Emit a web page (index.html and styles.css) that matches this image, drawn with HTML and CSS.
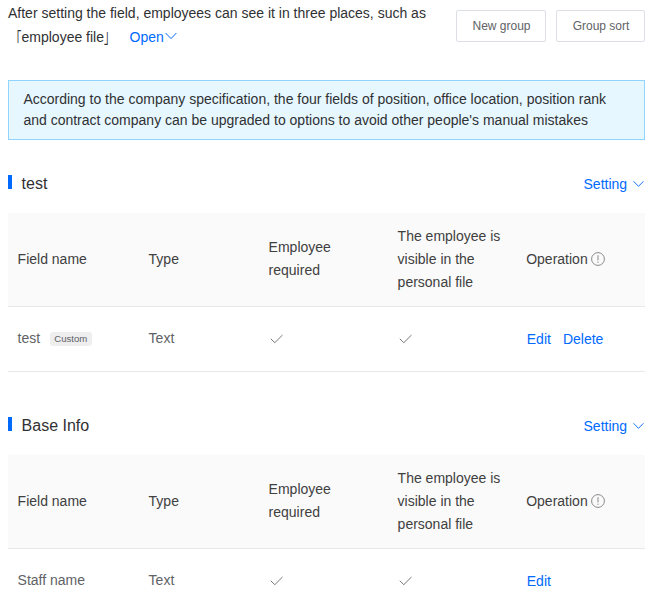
FILE: index.html
```html
<!DOCTYPE html>
<html lang="en">
<head>
<meta charset="utf-8">
<title>Field settings</title>
<link rel="stylesheet" href="styles.css">
</head>
<body>
<svg class="defs">
  <symbol id="down" viewBox="0 0 12 8"><path d="M.6 1 6 6.6 11.4 1"/></symbol>
  <symbol id="check" viewBox="0 0 14 10"><path d="M.8 4.8 4.8 8.7 12.5 1"/></symbol>
  <symbol id="info" viewBox="0 0 14 14"><circle cx="7" cy="7" r="6.4"/><path d="M7 3.2V8.4M7 9.6V10.9"/></symbol>
</svg>
<header class="top">
  <p class="intro">After setting the field, employees can see it in three places, such as<br><span class="bracket">「</span>employee file<span class="bracket close">」</span><a class="open">Open<svg class="down"><use href="#down"/></svg></a></p>
  <div class="buttons"><button>New group</button><button>Group sort</button></div>
</header>
<div class="notice">According to the company specification, the four fields of position, office location, position rank<br>and contract company can be upgraded to options to avoid other people's manual mistakes</div>
<section>
  <div class="title"><h2>test</h2><a>Setting<svg class="down"><use href="#down"/></svg></a></div>
  <div class="row head"><span>Field name</span><span>Type</span><span class="two">Employee<br>required</span><span>The employee is<br>visible in the<br>personal file</span><span>Operation<svg class="info"><use href="#info"/></svg></span></div>
  <div class="row"><span class="cell">test<em class="tag">Custom</em></span><span class="cell">Text</span><span><svg class="check"><use href="#check"/></svg></span><span><svg class="check"><use href="#check"/></svg></span><span class="ops"><a>Edit</a><a>Delete</a></span></div>
</section>
<section>
  <div class="title"><h2>Base Info</h2><a>Setting<svg class="down"><use href="#down"/></svg></a></div>
  <div class="row head"><span>Field name</span><span>Type</span><span class="two">Employee<br>required</span><span>The employee is<br>visible in the<br>personal file</span><span>Operation<svg class="info"><use href="#info"/></svg></span></div>
  <div class="row"><span class="cell">Staff name</span><span class="cell">Text</span><span><svg class="check"><use href="#check"/></svg></span><span><svg class="check"><use href="#check"/></svg></span><span class="ops"><a>Edit</a></span></div>
</section>
</body>
</html>
```
FILE: styles.css
```css
* { box-sizing: border-box; }
body { margin: 0; padding: 1px 15px 0 8px; height: 592px; overflow: hidden; background: #fff; color: #303133; font: 14px/23px "Liberation Sans", "Noto Sans CJK SC", sans-serif; }
svg { fill: none; stroke: currentColor; }
.defs { position: absolute; width: 0; height: 0; }
a { color: #006aff; }
.down { width: 12px; height: 8px; }
.top { display: flex; justify-content: space-between; height: 79px; }
.intro { margin: 0; white-space: nowrap; line-height: 24px; }
.bracket { display: inline-block; width: 13.5px; line-height: 20px; transform: translateY(3px) scale(.75, 1.35); transform-origin: 80% 50%; }
.bracket.close { transform: translateY(-1px) scale(.75, 1.35); transform-origin: 0 50%; }
.open { margin-left: 12px; }
.open .down { margin: 0 0 2px 1px; }
.buttons { display: flex; gap: 10px; padding-top: 9px; }
button { width: 90px; height: 32px; padding: 0 0 0 1px; border: 1px solid #dcdfe6; border-radius: 2px; background: #fff; color: #606266; font: 12px "Liberation Sans", sans-serif; }
button + button { width: 89px; }
.notice { height: 60px; padding: 8px 14.4px; border: 1px solid #91d5ff; background: #e6f7ff; line-height: 21px; white-space: nowrap; }
.title { display: flex; align-items: center; justify-content: space-between; height: 23px; margin-top: 32px; }
.title h2 { display: flex; align-items: center; margin: 0; font-size: 16px; font-weight: 400; }
.title h2::before { content: ""; width: 4px; height: 14px; margin: 0 9.6px 4px 0; background: #006aff; }
.title a { padding-top: 2px; }
.title .down { width: 11px; height: 8px; margin: 0 1.4px 1px 5.5px; }
.row { display: grid; grid-template-columns: 131px 120px 129px 128.6px 1fr; align-items: center; height: 65px; padding-left: 9.6px; border-bottom: 1px solid #e8e8e8; color: #606266; white-space: nowrap; }
.row.head { height: 94px; margin-top: 18px; background: #fafafa; color: #404040; }
section + section { margin-top: 42px; }
.two, .cell { padding-bottom: 2px; }
.check { display: block; width: 14px; height: 10px; margin-left: 1px; color: #777; }
.info { width: 14px; height: 14px; margin-left: 3.5px; vertical-align: -2px; color: #888; }
.tag { display: inline-block; width: 42px; margin-left: 9.6px; border-radius: 3px; background: #eee; font: 9.6px/14px "Liberation Sans", sans-serif; text-align: center; vertical-align: 1px; }
.ops { display: flex; gap: 12px; padding-left: .6px; }
```
